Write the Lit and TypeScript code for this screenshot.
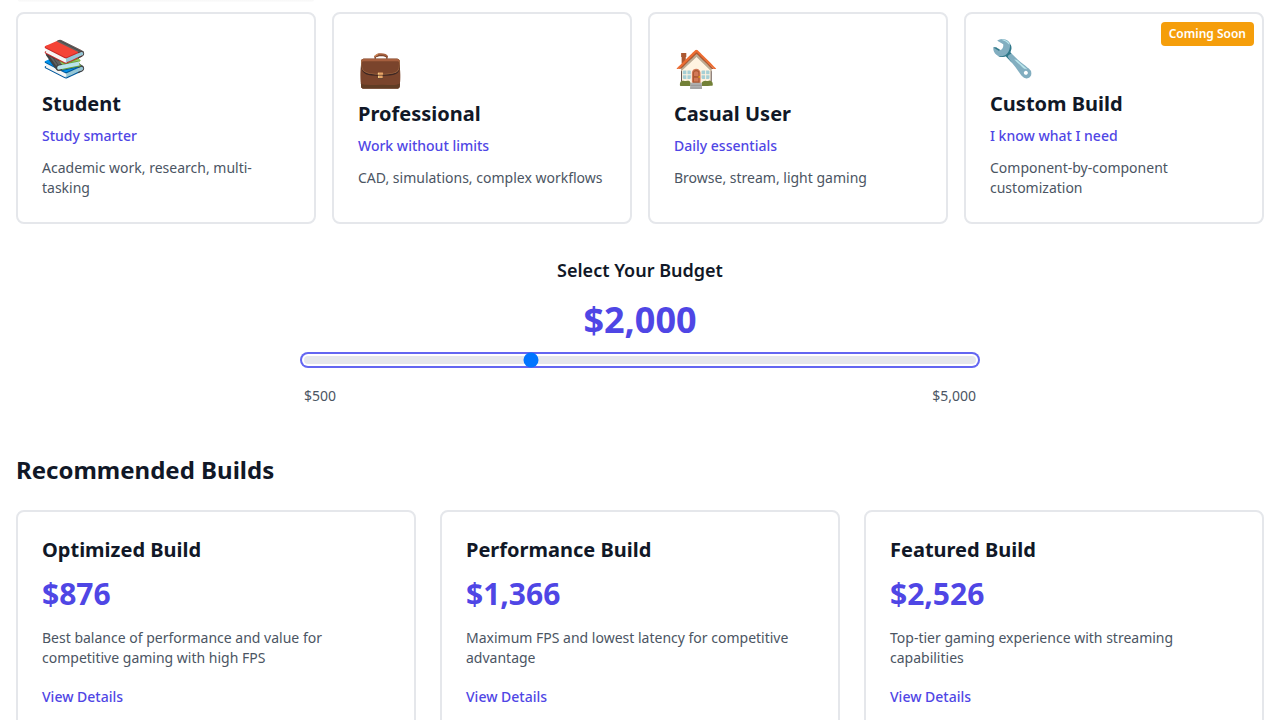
import { LitElement, html, css } from "lit";
import { customElement } from "lit/decorators.js";

const personas = [
  { icon: "📚", title: "Student", tag: "Study smarter", text: "Academic work, research, multi-tasking" },
  { icon: "💼", title: "Professional", tag: "Work without limits", text: "CAD, simulations, complex workflows" },
  { icon: "🏠", title: "Casual User", tag: "Daily essentials", text: "Browse, stream, light gaming" },
  { icon: "🔧", title: "Custom Build", tag: "I know what I need", text: "Component-by-component customization", soon: true },
];

const builds = [
  { title: "Optimized Build", price: "$876", text: "Best balance of performance and value for competitive gaming with high FPS" },
  { title: "Performance Build", price: "$1,366", text: "Maximum FPS and lowest latency for competitive advantage" },
  { title: "Featured Build", price: "$2,526", text: "Top-tier gaming experience with streaming capabilities" },
];

@customElement("app-root")
export class AppRoot extends LitElement {
  static styles = css`
    :host {
      display: block;
      height: 720px;
      overflow: hidden;
      background: #fff;
      color: #111827;
      font-family: "Noto Sans", sans-serif;
      font-size: 16px;
      line-height: 1.5;
    }
    * { box-sizing: border-box; }
    h2, h3, p { margin: 0; }
    .page { padding: 0 16px; }
    .previous { height: 12px; display: flex; }
    .previous span { width: 296px; height: 2px; margin-left: 2px; background: linear-gradient(#f7f7f7, #fcfcfc); border-radius: 0 0 8px 8px; }
    .personas { display: grid; grid-template-columns: repeat(4, 1fr); gap: 16px; }
    .card { border: 2px solid #e5e7eb; border-radius: 8px; background: #fff; padding: 24px; }
    .persona { position: relative; height: 212px; display: flex; flex-direction: column; justify-content: center; }
    .icon { font-size: 36px; line-height: 40px; margin-bottom: 12px; }
    h3 { font-size: 20px; line-height: 28px; font-weight: 700; }
    .persona h3 { margin-bottom: 8px; }
    .tag { font-size: 14px; line-height: 20px; font-weight: 500; color: #4f46e5; margin-bottom: 12px; }
    .text { font-size: 14px; line-height: 20px; color: #4b5563; }
    .badge {
      position: absolute; top: 8px; right: 8px; padding: 4px 8px; border-radius: 4px;
      background: #f59e0b; color: #fff; font-size: 12px; line-height: 16px; font-weight: 600;
    }
    .budget { width: 672px; margin: 32px auto 0; text-align: center; }
    .label { font-size: 18px; line-height: 28px; font-weight: 600; margin-bottom: 16px; }
    .amount { font-size: 36px; line-height: 40px; font-weight: 700; color: #4f46e5; margin-bottom: 16px; }
    input {
      display: block; appearance: none; width: 100%; height: 8px; margin: 0;
      background: #e5e7eb; border-radius: 8px; outline: none;
      box-shadow: 0 0 0 2px #fff, 0 0 0 4px #6366f1;
    }
    .range { display: flex; justify-content: space-between; margin-top: 22px; font-size: 14px; line-height: 20px; color: #4b5563; }
    h2 { font-size: 24px; line-height: 32px; font-weight: 700; margin: 48px 0 24px; }
    .builds { display: grid; grid-template-columns: repeat(3, 1fr); gap: 24px; }
    .build { height: 222px; }
    .price { font-size: 30px; line-height: 36px; font-weight: 700; color: #4f46e5; margin: 12px 0 16px; }
    .link { display: block; font-size: 14px; line-height: 20px; font-weight: 500; color: #4f46e5; margin-top: 19px; }
  `;

  render() {
    return html`
      <main class="page">
        <div class="previous"><span></span></div>
        <section class="personas">
          ${personas.map((p) => html`
            <article class="card persona">
              ${p.soon ? html`<span class="badge">Coming Soon</span>` : ""}
              <div class="icon">${p.icon}</div>
              <h3>${p.title}</h3>
              <p class="tag">${p.tag}</p>
              <p class="text">${p.text}</p>
            </article>`)}
        </section>
        <section class="budget">
          <p class="label">Select Your Budget</p>
          <p class="amount">$2,000</p>
          <input type="range" min="500" max="5000" step="50" .value=${"2000"} />
          <div class="range"><span>$500</span><span>$5,000</span></div>
        </section>
        <h2>Recommended Builds</h2>
        <section class="builds">
          ${builds.map((b) => html`
            <article class="card build">
              <h3>${b.title}</h3>
              <p class="price">${b.price}</p>
              <p class="text">${b.text}</p>
              <span class="link">View Details</span>
            </article>`)}
        </section>
      </main>
    `;
  }
}
